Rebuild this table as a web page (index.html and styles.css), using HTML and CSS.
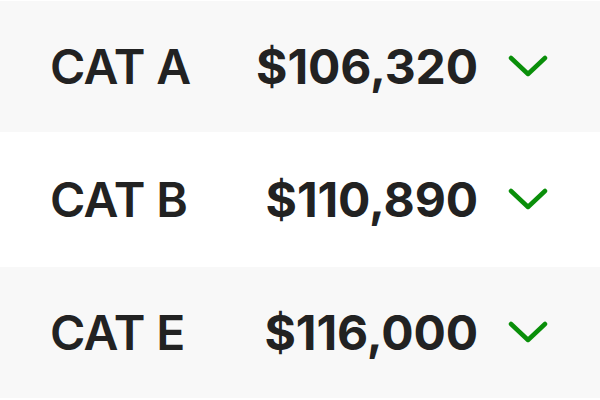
FILE: index.html
```html
<!DOCTYPE html>
<html>
<head>
<meta charset="utf-8">
<link rel="stylesheet" href="styles.css">
</head>
<body>
<ul class="list">
  <li class="row alt">
    <span class="name">CAT A</span>
    <span class="price">$106,320</span>
    <svg class="chev" viewBox="0 0 42 26" width="42" height="26"><path d="M3 4 L20 20 L37 4" /></svg>
  </li>
  <li class="row">
    <span class="name">CAT B</span>
    <span class="price">$110,890</span>
    <svg class="chev" viewBox="0 0 42 26" width="42" height="26"><path d="M3 4 L20 20 L37 4" /></svg>
  </li>
  <li class="row alt">
    <span class="name">CAT E</span>
    <span class="price">$116,000</span>
    <svg class="chev" viewBox="0 0 42 26" width="42" height="26"><path d="M3 4 L20 20 L37 4" /></svg>
  </li>
</ul>
</body>
</html>
```
FILE: styles.css
```css
html, body {
  margin: 0;
  padding: 0;
  background: #ffffff;
  width: 600px;
  height: 400px;
  overflow: hidden;
}
.list {
  list-style: none;
  margin: 0;
  padding: 1px 0 0 0;
  display: flex;
  flex-direction: column;
  gap: 2px;
  font-family: Inter, "Noto Sans", sans-serif;
  color: #222222;
}
.row {
  height: 131px;
  display: flex;
  align-items: center;
  padding: 0 50px 0 50px;
  box-sizing: border-box;
}
.row.alt {
  background: #f8f8f8;
}
.name {
  flex: 1;
  font-size: 48px;
  font-weight: 600;
  letter-spacing: -0.6px;
}
.price {
  font-size: 48px;
  font-weight: 700;
  letter-spacing: -0.1px;
  margin-right: 30px;
}
.chev {
  display: block;
}
.chev path {
  fill: none;
  stroke: #0a8f0a;
  stroke-width: 4.5;
  stroke-linecap: round;
  stroke-linejoin: round;
}
```
